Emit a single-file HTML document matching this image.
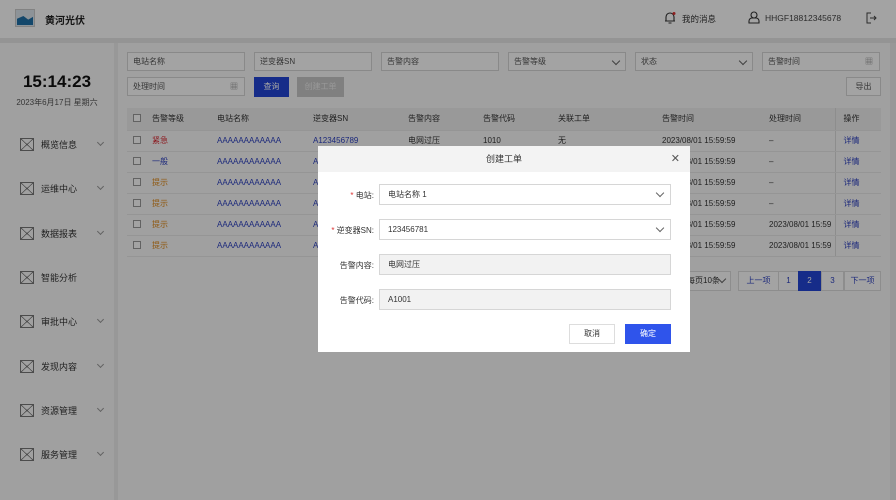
<!DOCTYPE html>
<html><head><meta charset="utf-8"><style>
*{margin:0;padding:0;box-sizing:border-box}
body{width:896px;height:500px;overflow:hidden;font-family:"Liberation Sans","Noto Sans CJK SC",sans-serif;font-size:8px;color:#333;background:#eee;position:relative}
.abs{position:absolute}
.hdr{left:0;top:0;width:896px;height:38px;background:#fff}
.sep{left:0;top:38px;width:896px;height:5px;background:#e8e8e8}
.side{left:0;top:43px;width:114px;height:457px;background:#fafafa}
.main{left:118px;top:43px;width:772px;height:457px;background:#fbfbfb}
.inp{position:absolute;height:19px;border:1px solid #d6d6d6;background:#fff;padding-left:5px;line-height:17px;font-size:8px;color:#555}
.chev{position:absolute;right:6px;top:5px;width:6px;height:6px;border-right:1px solid #666;border-bottom:1px solid #666;transform:rotate(45deg)}
.nav{position:absolute;left:20px;font-size:9px;color:#333}
.nav .ic{position:absolute;left:0;top:-6px;width:14px;height:13px;border:1px solid #777;background:linear-gradient(to top right,transparent 47%,#777 48%,#777 52%,transparent 53%),linear-gradient(to top left,transparent 47%,#777 48%,#777 52%,transparent 53%)}
.nav .t{position:absolute;left:21px;top:-6px;white-space:nowrap}
.nav .cv{position:absolute;left:78px;top:-4px;width:5px;height:5px;border-right:1px solid #999;border-bottom:1px solid #999;transform:rotate(45deg)}
table{position:absolute;left:127px;top:108px;width:754px;border-collapse:collapse;font-size:8px}
td{height:21px;border-bottom:1px solid #eaeaea;white-space:nowrap;overflow:hidden}
tr.h td{height:22px;background:#f0f0f0;color:#333}
.cb{display:inline-block;width:8px;height:8px;border:1px solid #999;background:#fff;margin-left:6px}
.blue{color:#2b3fc0}.red{color:#d9232d}.org{color:#e08a1a}
.ov{left:0;top:0;width:896px;height:500px;background:rgba(0,0,0,.36)}
.modal{left:318px;top:146px;width:372px;height:206px;background:#fff}
.mt{height:26px;background:#f3f3f3;text-align:center;line-height:26px;font-size:9px;color:#333}
.lab{position:absolute;right:316px;font-size:8px;color:#333;white-space:nowrap}
.mi{position:absolute;left:61px;width:292px;height:21px;border:1px solid #d6d6d6;padding-left:8px;line-height:19px;font-size:8px;color:#333}
.pg{position:absolute;top:271px;height:20px;border:1px solid #ddd;background:#fff;text-align:center;line-height:18px;font-size:8px;color:#2b3fc0}
</style></head><body>
<div class="abs hdr"></div>
<div class="abs" style="left:15px;top:9px;width:20px;height:18px;background:#dde7ee;border:1px solid #ccc"><div style="position:absolute;left:1px;bottom:1px;width:16px;height:9px;background:#1e6fa8;clip-path:polygon(0 30%,40% 0,70% 40%,100% 10%,100% 100%,0 100%)"></div></div>
<div class="abs" style="left:45px;top:12px;font-size:10px;font-weight:bold;color:#222">黄河光伏</div>
<svg class="abs" style="left:664px;top:11px" width="12" height="13" viewBox="0 0 12 13"><path d="M2 10 V6 a4 4 0 0 1 8 0 V10 Z M1 10 H11 M4.5 12 H7.5" fill="none" stroke="#333" stroke-width="1.1"/><circle cx="10" cy="2.5" r="1.5" fill="#d33"/></svg>
<div class="abs" style="left:682px;top:13px;font-size:8.5px">我的消息</div>
<svg class="abs" style="left:748px;top:11px" width="12" height="13" viewBox="0 0 12 13"><circle cx="6" cy="4" r="3" fill="none" stroke="#333" stroke-width="1.1"/><path d="M1 12 V10 a3 3 0 0 1 3-3 H8 a3 3 0 0 1 3 3 V12 Z" fill="none" stroke="#333" stroke-width="1.1"/></svg>
<div class="abs" style="left:765px;top:13px;font-size:8.5px;color:#444">HHGF18812345678</div>
<svg class="abs" style="left:866px;top:12px" width="11" height="12" viewBox="0 0 11 12"><path d="M5 1 H1 V11 H5 M4 6 H10 M8 4 L10 6 L8 8" fill="none" stroke="#444" stroke-width="1"/></svg>
<div class="abs sep"></div>
<div class="abs side"></div>
<div class="abs" style="left:0;top:72px;width:114px;text-align:center;font-size:17px;font-weight:bold;color:#111">15:14:23</div>
<div class="abs" style="left:0;top:97px;width:114px;text-align:center;font-size:8px;color:#555">2023年6月17日 星期六</div>
<div class="nav" style="top:144px"><div class="ic"></div><div class="t">概览信息</div><div class="cv"></div></div>
<div class="nav" style="top:188px"><div class="ic"></div><div class="t">运维中心</div><div class="cv"></div></div>
<div class="nav" style="top:233px"><div class="ic"></div><div class="t">数据报表</div><div class="cv"></div></div>
<div class="nav" style="top:277px"><div class="ic"></div><div class="t">智能分析</div></div>
<div class="nav" style="top:321px"><div class="ic"></div><div class="t">审批中心</div><div class="cv"></div></div>
<div class="nav" style="top:366px"><div class="ic"></div><div class="t">发现内容</div><div class="cv"></div></div>
<div class="nav" style="top:410px"><div class="ic"></div><div class="t">资源管理</div><div class="cv"></div></div>
<div class="nav" style="top:454px"><div class="ic"></div><div class="t">服务管理</div><div class="cv"></div></div>
<div class="abs main"></div>
<div class="inp" style="left:127px;top:52px;width:118px">电站名称</div>
<div class="inp" style="left:254px;top:52px;width:118px">逆变器SN</div>
<div class="inp" style="left:381px;top:52px;width:118px">告警内容</div>
<div class="inp" style="left:508px;top:52px;width:118px">告警等级<div class="chev"></div></div>
<div class="inp" style="left:635px;top:52px;width:118px">状态<div class="chev"></div></div>
<div class="inp" style="left:762px;top:52px;width:118px">告警时间<span style="position:absolute;right:6px;top:0;color:#888">▦</span></div>
<div class="inp" style="left:127px;top:77px;width:118px">处理时间<span style="position:absolute;right:6px;top:0;color:#888">▦</span></div>
<div class="abs" style="left:254px;top:77px;width:35px;height:20px;background:#2346d6;color:#fff;text-align:center;line-height:20px">查询</div>
<div class="abs" style="left:297px;top:77px;width:47px;height:20px;background:#c8c8c8;color:#eee;text-align:center;line-height:20px">创建工单</div>
<div class="inp" style="left:846px;top:77px;width:35px;padding:0;text-align:center">导出</div>
<table>
<tr class="h"><td style="width:25px"><span class="cb"></span></td><td style="width:65px">告警等级</td><td style="width:96px">电站名称</td><td style="width:95px">逆变器SN</td><td style="width:75px">告警内容</td><td style="width:75px">告警代码</td><td style="width:104px">关联工单</td><td style="width:107px">告警时间</td><td style="width:66px">处理时间</td><td style="border-left:1px solid #ddd;padding-left:8px">操作</td></tr>
<tr><td><span class="cb"></span></td><td class="red">紧急</td><td class="blue">AAAAAAAAAAAA</td><td class="blue">A123456789</td><td>电网过压</td><td>1010</td><td>无</td><td>2023/08/01 15:59:59</td><td>–</td><td class="blue" style="border-left:1px solid #ddd;padding-left:8px">详情</td></tr>
<tr><td><span class="cb"></span></td><td class="blue">一般</td><td class="blue">AAAAAAAAAAAA</td><td class="blue">A</td><td></td><td></td><td></td><td>2023/08/01 15:59:59</td><td>–</td><td class="blue" style="border-left:1px solid #ddd;padding-left:8px">详情</td></tr>
<tr><td><span class="cb"></span></td><td class="org">提示</td><td class="blue">AAAAAAAAAAAA</td><td class="blue">A</td><td></td><td></td><td></td><td>2023/08/01 15:59:59</td><td>–</td><td class="blue" style="border-left:1px solid #ddd;padding-left:8px">详情</td></tr>
<tr><td><span class="cb"></span></td><td class="org">提示</td><td class="blue">AAAAAAAAAAAA</td><td class="blue">A</td><td></td><td></td><td></td><td>2023/08/01 15:59:59</td><td>–</td><td class="blue" style="border-left:1px solid #ddd;padding-left:8px">详情</td></tr>
<tr><td><span class="cb"></span></td><td class="org">提示</td><td class="blue">AAAAAAAAAAAA</td><td class="blue">A</td><td></td><td></td><td></td><td>2023/08/01 15:59:59</td><td>2023/08/01 15:59</td><td class="blue" style="border-left:1px solid #ddd;padding-left:8px">详情</td></tr>
<tr><td><span class="cb"></span></td><td class="org">提示</td><td class="blue">AAAAAAAAAAAA</td><td class="blue">A</td><td></td><td></td><td></td><td>2023/08/01 15:59:59</td><td>2023/08/01 15:59</td><td class="blue" style="border-left:1px solid #ddd;padding-left:8px">详情</td></tr>
</table>
<div class="pg" style="left:680px;width:51px;color:#333;text-align:left;padding-left:6px">每页10条<div class="chev" style="top:4px;right:5px"></div></div>
<div class="pg" style="left:738px;width:41px">上一项</div>
<div class="pg" style="left:778px;width:21px">1</div>
<div class="pg" style="left:798px;width:23px;background:#2346d6;color:#fff;border-color:#2346d6">2</div>
<div class="pg" style="left:821px;width:23px">3</div>
<div class="pg" style="left:844px;width:37px">下一项</div>
<div class="abs ov"></div>
<div class="abs modal">
<div class="mt">创建工单</div>
<div class="abs" style="right:10px;top:6px;font-size:11px;color:#555">✕</div>
<div class="lab" style="top:44px"><span style="color:#d33">* </span>电站:</div>
<div class="mi" style="top:38px">电站名称 1<div class="chev" style="top:5px;right:7px"></div></div>
<div class="lab" style="top:79px"><span style="color:#d33">* </span>逆变器SN:</div>
<div class="mi" style="top:73px">123456781<div class="chev" style="top:5px;right:7px"></div></div>
<div class="lab" style="top:114px">告警内容:</div>
<div class="mi" style="top:108px;background:#f2f2f2">电网过压</div>
<div class="lab" style="top:149px">告警代码:</div>
<div class="mi" style="top:143px;background:#f2f2f2">A1001</div>
<div class="abs" style="left:251px;top:178px;width:46px;height:20px;border:1px solid #ddd;text-align:center;line-height:18px">取消</div>
<div class="abs" style="left:307px;top:178px;width:46px;height:20px;background:#2f54eb;color:#fff;text-align:center;line-height:20px">确定</div>
</div>
</body></html>
